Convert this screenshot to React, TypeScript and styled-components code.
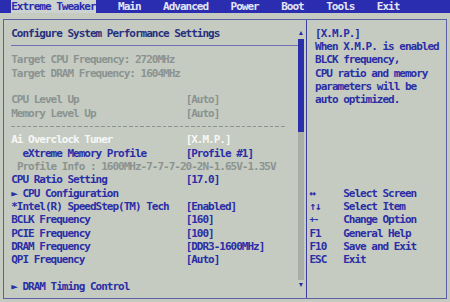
import styled, { createGlobalStyle } from "styled-components";

const CELL = 5.625;
const ROW = 13.33;

const GlobalStyle = createGlobalStyle`
  html, body {
    margin: 0;
    padding: 0;
    background: #c5cbc1;
  }
  body {
    font-family: "DejaVu Sans Mono", "Liberation Mono", monospace;
    font-weight: bold;
    font-size: 11px;
    letter-spacing: -1px;
  }
`;

const Screen = styled.div`
  width: 450px;
  height: 302px;
  display: flex;
  flex-direction: column;
  overflow: hidden;
  background: #c5cbc1;
`;

const MenuBar = styled.div`
  height: 13px;
  flex: none;
  display: flex;
  gap: ${CELL * 4}px;
  padding-left: ${CELL * 2}px;
  background: #2a2db0;
  line-height: 13px;
`;

const MenuItem = styled.span<{ active?: boolean }>`
  white-space: pre;
  color: ${(p) => (p.active ? "#2a2db0" : "#e4e6f4")};
  background: ${(p) => (p.active ? "#ccd2cf" : "transparent")};
`;

const Frame = styled.div`
  flex: 1;
  display: flex;
  margin: 5.5px 3.5px 3px 3px;
  border: 1px solid #5c60a4;
`;

const LeftPanel = styled.div`
  width: 302px;
  flex: none;
  display: flex;
  border-right: 1.5px solid #3c40a0;
`;

const Content = styled.div`
  flex: 1;
  padding: 7.3px 0 0 7.25px;
`;

const Row = styled.div<{ tone?: "blue" | "grey" | "white"; indent?: number }>`
  display: grid;
  grid-template-columns: ${CELL * 31}px 1fr;
  height: ${ROW}px;
  line-height: ${ROW}px;
  white-space: pre;
  padding-left: ${(p) => (p.indent ?? 0) * CELL}px;
  color: ${(p) =>
    p.tone === "grey" ? "#8b9391" : p.tone === "white" ? "#f6f7f6" : "#2b2ea6"};
`;

const Value = styled.span<{ indent?: number }>`
  margin-left: ${(p) => -(p.indent ?? 0) * CELL}px;
`;

const Heading = styled.div`
  height: ${ROW}px;
  line-height: ${ROW}px;
  color: #28307e;
`;

const RuleRow = styled.div<{ dashed?: boolean }>`
  height: ${ROW}px;
  display: flex;
  align-items: center;
  padding-right: ${(p) => (p.dashed ? 12 : 0)}px;
  &::after {
    content: "";
    flex: 1;
    height: 1px;
    margin-top: ${(p) => (p.dashed ? 0 : -2)}px;
    background: ${(p) =>
      p.dashed
        ? `repeating-linear-gradient(90deg, #8d9593 0 3.6px, transparent 3.6px ${CELL}px)`
        : "#6d70b4"};
  }
`;

const Blank = styled.div`
  height: ${ROW}px;
`;

const Scrollbar = styled.div`
  width: ${CELL}px;
  flex: none;
  margin: 7.5px 2.25px 6px 0;
  display: flex;
  flex-direction: column;
  align-items: center;
`;

const Arrow = styled.div<{ down?: boolean }>`
  height: 12px;
  flex: none;
  display: flex;
  align-items: ${(p) => (p.down ? "flex-start" : "flex-end")};
  justify-content: center;
  padding-bottom: ${(p) => (p.down ? 0 : 4)}px;
  box-sizing: border-box;
  &::before {
    content: "";
    border-left: 2.5px solid transparent;
    border-right: 2.5px solid transparent;
    ${(p) =>
      p.down
        ? "border-top: 4px solid #2b2ea6; margin-top: 3px;"
        : "border-bottom: 4px solid #2b2ea6;"}
  }
`;

const Track = styled.div`
  flex: 1;
  width: 100%;
  background: #a9afa7;
`;

const Thumb = styled.div`
  height: 93px;
  background: #2b2faa;
`;

const RightPanel = styled.div`
  flex: 1;
  padding: 7.3px 0 0 2.4px;
  color: #2b2ea6;
`;

const Help = styled.div`
  padding-left: ${CELL}px;
`;

const Line = styled.div`
  height: ${ROW}px;
  line-height: ${ROW}px;
  white-space: pre;
`;

const Legend = styled.div`
  margin-top: ${ROW * 6}px;
`;

const KeyRow = styled.div`
  display: grid;
  grid-template-columns: ${CELL * 6}px 1fr;
  height: ${ROW}px;
  line-height: ${ROW}px;
  white-space: pre;
`;

const Key = styled.span<{ small?: boolean }>`
  font-size: ${(p) => (p.small ? 9 : 11)}px;
`;

const menu = ["Extreme Tweaker", "Main", "Advanced", "Power", "Boot", "Tools", "Exit"];

type Item = {
  label: string;
  value?: string;
  tone?: "blue" | "grey" | "white";
  indent?: number;
};

const upper: Item[] = [
  { label: "CPU Level Up", value: "[Auto]", tone: "grey" },
  { label: "Memory Level Up", value: "[Auto]", tone: "grey" },
];

const lower: Item[] = [
  { label: "Ai Overclock Tuner", value: "[X.M.P.]", tone: "white" },
  { label: "eXtreme Memory Profile", value: "[Profile #1]", indent: 2 },
  { label: "Profile Info : 1600MHz-7-7-7-20-2N-1.65V-1.35V", tone: "grey", indent: 1 },
  { label: "CPU Ratio Setting", value: "[17.0]" },
  { label: "\u25BA CPU Configuration" },
  { label: "*Intel(R) SpeedStep(TM) Tech", value: "[Enabled]" },
  { label: "BCLK Frequency", value: "[160]" },
  { label: "PCIE Frequency", value: "[100]" },
  { label: "DRAM Frequency", value: "[DDR3-1600MHz]" },
  { label: "QPI Frequency", value: "[Auto]" },
];

const help = [
  "[X.M.P.]",
  "When X.M.P. is enabled",
  "BLCK frequency,",
  "CPU ratio and memory",
  "parameters will be",
  "auto optimized.",
];

const keys = [
  { key: "\u2194", desc: "Select Screen" },
  { key: "\u2191\u2193", desc: "Select Item" },
  { key: "+-", desc: "Change Option", small: true },
  { key: "F1", desc: "General Help" },
  { key: "F10", desc: "Save and Exit" },
  { key: "ESC", desc: "Exit" },
];

function renderItem(it: Item) {
  return (
    <Row key={it.label} tone={it.tone} indent={it.indent}>
      <span>{it.label}</span>
      {it.value && <Value indent={it.indent}>{it.value}</Value>}
    </Row>
  );
}

export default function App() {
  return (
    <>
      <GlobalStyle />
      <Screen>
        <MenuBar>
          {menu.map((m, i) => (
            <MenuItem key={m} active={i === 0}>
              {m}
            </MenuItem>
          ))}
        </MenuBar>
        <Frame>
          <LeftPanel>
            <Content>
              <Heading>Configure System Performance Settings</Heading>
              <RuleRow />
              <Row tone="grey">Target CPU Frequency: 2720MHz</Row>
              <Row tone="grey">Target DRAM Frequency: 1604MHz</Row>
              <Blank />
              {upper.map(renderItem)}
              <RuleRow dashed />
              {lower.map(renderItem)}
              <Blank />
              <Row>{"\u25BA DRAM Timing Control"}</Row>
            </Content>
            <Scrollbar>
              <Arrow />
              <Track>
                <Thumb />
              </Track>
              <Arrow down />
            </Scrollbar>
          </LeftPanel>
          <RightPanel>
            <Help>
              {help.map((h) => (
                <Line key={h}>{h}</Line>
              ))}
            </Help>
            <Legend>
              {keys.map((k) => (
                <KeyRow key={k.desc}>
                  <Key small={k.small}>{k.key}</Key>
                  <span>{k.desc}</span>
                </KeyRow>
              ))}
            </Legend>
          </RightPanel>
        </Frame>
      </Screen>
    </>
  );
}
